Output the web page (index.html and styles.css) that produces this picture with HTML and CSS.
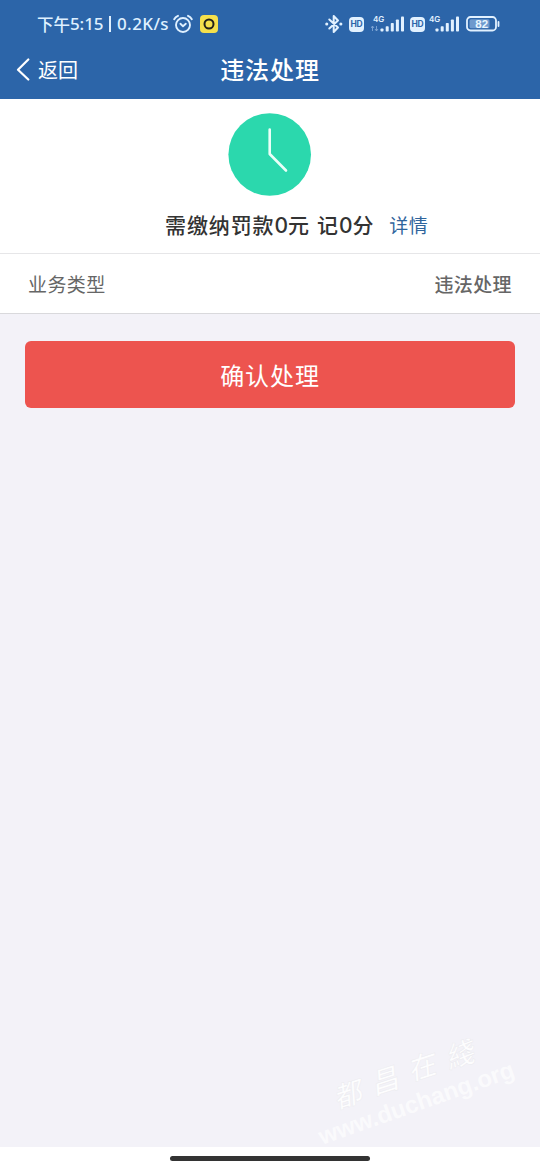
FILE: index.html
```html
<!DOCTYPE html>
<html lang="zh-CN">
<head>
<meta charset="utf-8">
<title>违法处理</title>
<link rel="stylesheet" href="styles.css">
</head>
<body>
<div class="screen">
  <header class="top">
    <div class="status">
      <div class="status-left">
        <span class="time-cn">下午</span><span class="time">5:15</span><span class="bar"></span><span class="speed">0.2K/s</span>
        <svg class="alarm" width="20" height="20" viewBox="0 0 20 20" fill="none" stroke="#dff0ff" stroke-width="1.9" stroke-linecap="round" stroke-linejoin="round"><circle cx="10" cy="11" r="7"/><path d="M1.2 5.200Q2.400 3 5 1.800M18.800 5.200Q17.600 3 15 1.800M7.400 9.800 10 12.200 12.800 9.800"/></svg>
        <svg class="app" width="18" height="18" viewBox="0 0 18 18"><rect width="18" height="18" rx="4" fill="#f5e04c"/><circle cx="9" cy="9" r="4.500" fill="none" stroke="#24221b" stroke-width="2"/></svg>
      </div>
      <div class="status-right">
        <svg class="bt" width="18" height="20" viewBox="0 0 18 20" fill="none" stroke="#e2f1ff" stroke-width="2" stroke-linejoin="round" stroke-linecap="round"><path d="M4.300 5.500 13 13.500 8.700 18V2L13 6.500 4.300 14.500"/><path d="M1.700 10h.1M15.800 10h.1" stroke-width="3"/></svg>
        <span class="hd">HD</span>
        <svg class="sig" width="34" height="20" viewBox="0 0 34 20" fill="#e2f1ff"><text x="2" y="8" class="g4">4G</text><path d="M1.500 17V12M0 14l1.500-2L3 14M5.500 12v5M4 15l1.500 2L7 15" fill="none" stroke="#7fa6d5" stroke-width=".9"/><rect x="9.500" y="14.500" width="3" height="3" rx=".8"/><rect x="14.700" y="12.200" width="3" height="5.300" rx=".8"/><rect x="19.800" y="9" width="3" height="8.500" rx=".8"/><rect x="24.900" y="5.500" width="3" height="12" rx=".8"/><rect x="30" y="2.500" width="3" height="15" rx=".8"/></svg>
        <span class="hd hd-second">HD</span>
        <svg class="sig-second" width="31" height="20" viewBox="0 0 31 20" fill="#e2f1ff"><text x="0" y="8" class="g4">4G</text><rect x="6.500" y="14.500" width="3" height="3" rx=".8"/><rect x="11.700" y="12.200" width="3" height="5.300" rx=".8"/><rect x="16.800" y="9" width="3" height="8.500" rx=".8"/><rect x="21.900" y="5.500" width="3" height="12" rx=".8"/><rect x="27" y="2.500" width="3" height="15" rx=".8"/></svg>
        <svg class="bat" width="34" height="16" viewBox="0 0 34 16"><rect x="1" y="1" width="29" height="13.500" rx="3.500" fill="none" stroke="#e2f1ff" stroke-width="1.8"/><rect x="3.500" y="3.300" width="20" height="9" rx="1.500" fill="#6e99cd"/><path d="M32.500 6v4" stroke="#e2f1ff" stroke-width="1.800" stroke-linecap="round"/><text x="15.700" y="12" text-anchor="middle" class="pct">82</text></svg>
      </div>
    </div>
    <nav class="nav">
      <a class="back"><svg width="14" height="24" viewBox="0 0 14 24" fill="none" stroke="#fff" stroke-width="2.200" stroke-linecap="round" stroke-linejoin="round"><path d="M12.300 1.500 2 11.700 12.300 21.500"/></svg><span>返回</span></a>
      <h1>违法处理</h1>
    </nav>
  </header>
  <section class="summary">
    <svg class="clock" width="84" height="84" viewBox="0 0 84 84"><circle cx="41.700" cy="41.500" r="41.300" fill="#2bd8ad"/><path d="M41.700 16.500v24.500L58 57.500" fill="none" stroke="#eafff8" stroke-width="2.600" stroke-linecap="round" stroke-linejoin="round"/></svg>
    <p class="fine"><span class="amount">需缴纳罚款<span class="num">0</span>元</span><span class="points">记<span class="num">0</span>分</span><a class="detail">详情</a></p>
  </section>
  <section class="row"><span class="label">业务类型</span><span class="value">违法处理</span></section>
  <main class="content"><button class="confirm">确认处理</button></main>
  <footer class="gesture"><div class="handle"></div></footer>
  <svg class="watermark" width="240" height="150" viewBox="300 1020 240 150" fill="#fff">
    <g class="brand"><text transform="translate(337 1109) rotate(-18)">都</text><text transform="translate(374 1095) rotate(-18)">昌</text><text transform="translate(411 1081) rotate(-18)">在</text><text transform="translate(449 1069) rotate(-18)">綫</text></g>
    <text class="site" transform="translate(322 1145) rotate(-19.500)" textLength="206">www.duchang.org</text>
  </svg>
</div>
</body>
</html>
```
FILE: styles.css
```css
* { box-sizing: border-box; }
body {
  margin: 0;
  font-family: "Noto Sans CJK SC", sans-serif;
}
.screen {
  position: relative;
  width: 540px;
  height: 1170px;
  display: flex;
  flex-direction: column;
  overflow: hidden;
  background: #f3f2f8;
}
.top {
  height: 99px;
  flex: none;
  background: #2c65a9;
  color: #fff;
}
.status {
  height: 48px;
  padding: 0 40px 0 37px;
  display: flex;
  justify-content: space-between;
  align-items: center;
}
.status-left, .status-right { display: flex; align-items: center; }
.status-left {
  color: #dff0ff;
  font-size: 16.500px;
  font-weight: 500;
  line-height: 24px;
}
.time, .speed { font-family: "Noto Sans", sans-serif; font-size: 17px; }
.time { width: 33px; letter-spacing: -.1px; }
.speed { width: 54px; letter-spacing: .4px; white-space: nowrap; }
.bar { width: 2px; height: 16px; margin: 0 6px 0 6px; background: #dff0ff; }
.alarm { margin: -1px 0 0 2px; }
.app { margin-left: 7px; }
.hd {
  width: 15px;
  height: 15px;
  margin: 0 0 0 6px;
  border-radius: 4px;
  background: #e2f1ff;
  color: #2c65a9;
  font: 700 8.500px/15px Inter, sans-serif;
  letter-spacing: -.3px;
  text-align: center;
}
.sig { margin-left: 7px; }
.hd-second { margin-left: 5px; }
.sig-second { margin-left: 4px; }
.bat { margin-left: 6px; }
.g4 { font: 600 8px Inter, sans-serif; }
.pct { font: 700 11.500px "Liberation Sans", sans-serif; fill: #e8f5ff; }
.nav {
  height: 44px;
  display: grid;
  grid-template-columns: 1fr auto 1fr;
  align-items: center;
}
.back {
  padding-left: 16px;
  display: flex;
  align-items: center;
  gap: 8px;
  font-size: 20px;
  line-height: 28px;
}
h1 {
  margin: -2px 0 0;
  font-size: 24px;
  font-weight: 500;
  line-height: 34px;
  letter-spacing: .9px;
}
.summary {
  height: 155px;
  padding-top: 14px;
  background: #fff;
  border-bottom: 1px solid #e6e6e8;
  display: flex;
  flex-direction: column;
}
.clock { align-self: center; flex: none; margin-top: -.5px; }
.fine {
  margin: 11.500px 0 0 165px;
  display: flex;
  align-items: center;
  color: #333;
  font-size: 21px;
  font-weight: 500;
  line-height: 32px;
  letter-spacing: .9px;
  white-space: nowrap;
}
.num { font-family: Inter, sans-serif; font-size: 21px; letter-spacing: 0; }
.points { margin-left: 7px; }
.detail { margin-left: 15px; font-size: 19px; font-weight: 400; letter-spacing: .3px; color: #2f649c; }
.row {
  height: 60px;
  padding: 0 28px;
  display: flex;
  align-items: center;
  justify-content: space-between;
  background: #fff;
  border-bottom: 1px solid #d9d9dc;
  color: #666;
  font-size: 19px;
  letter-spacing: .4px;
}
.value { font-weight: 500; }
.content { flex: 1; padding: 27.400px 25px 0; }
.confirm {
  display: block;
  width: 100%;
  height: 67px;
  padding: 0;
  border: 0;
  border-radius: 6px;
  background: #ed544f;
  color: #fff;
  font: 400 24px/34px "Noto Sans CJK SC", sans-serif;
  letter-spacing: .9px;
}
.gesture {
  height: 23px;
  flex: none;
  padding-top: 9px;
  background: #fff;
}
.handle { width: 200px; height: 5px; margin: 0 auto; border-radius: 3px; background: #333; }
.watermark { position: absolute; left: 300px; top: 1020px; }
.brand { font: italic 500 28px "Noto Sans CJK SC", sans-serif; stroke: #e9e9ed; stroke-width: .4px; opacity: .9; }
.site { font: 700 24px "Liberation Sans", sans-serif; opacity: .65; }
```
